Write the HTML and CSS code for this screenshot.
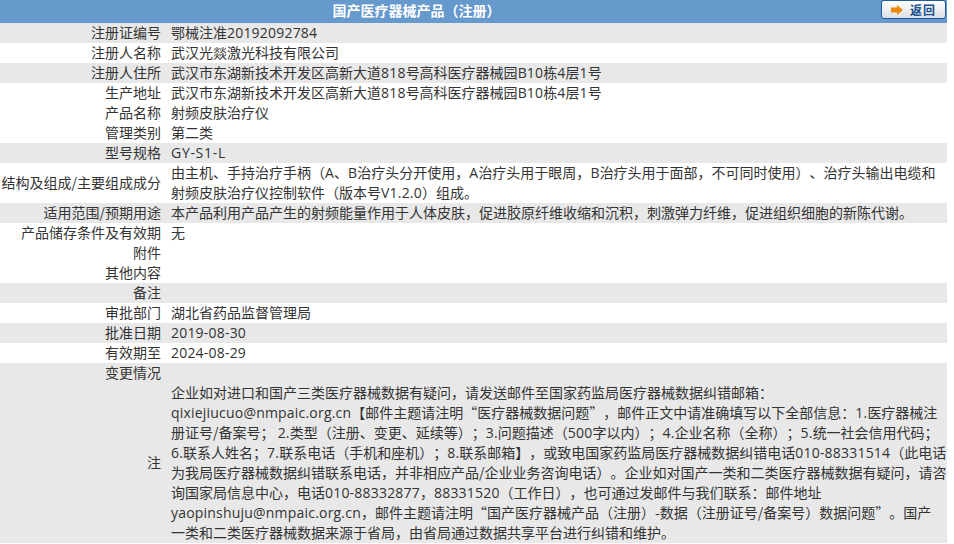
FILE: index.html
```html
<!DOCTYPE html>
<html lang="zh">
<head>
<meta charset="utf-8">
<title>国产医疗器械产品（注册）</title>
<link rel="stylesheet" href="styles.css">
</head>
<body>
<div class="sheet">
  <div class="head">
    <div class="head-title">国产医疗器械产品（注册）</div>
    <a class="back" href="#">
      <svg class="back-icon" width="12" height="10" viewBox="0 0 12 10"><path d="M0 2.5H6V0L12 5L6 10V7.5H0Z" fill="#e98a0c"/></svg>
      <span>返回</span>
    </a>
  </div>
  <div class="row grey"><div class="k">注册证编号</div><div class="v">鄂械注准<span class="la">20192092784</span></div></div>
  <div class="row"><div class="k">注册人名称</div><div class="v">武汉光燚激光科技有限公司</div></div>
  <div class="row grey"><div class="k">注册人住所</div><div class="v">武汉市东湖新技术开发区高新大道<span class="la">818</span>号高科医疗器械园<span class="la">B10</span>栋<span class="la">4</span>层<span class="la">1</span>号</div></div>
  <div class="row"><div class="k">生产地址</div><div class="v">武汉市东湖新技术开发区高新大道<span class="la">818</span>号高科医疗器械园<span class="la">B10</span>栋<span class="la">4</span>层<span class="la">1</span>号</div></div>
  <div class="row"><div class="k">产品名称</div><div class="v">射频皮肤治疗仪</div></div>
  <div class="row"><div class="k">管理类别</div><div class="v">第二类</div></div>
  <div class="row grey"><div class="k">型号规格</div><div class="v"><span class="la caps">GY-S1-L</span></div></div>
  <div class="row"><div class="k">结构及组成/主要组成成分</div><div class="v">由主机、手持治疗手柄（<span class="la">A</span>、<span class="la">B</span>治疗头分开使用，<span class="la">A</span>治疗头用于眼周，<span class="la">B</span>治疗头用于面部，不可同时使用）、治疗头输出电缆和射频皮肤治疗仪控制软件（版本号<span class="la">V1.2.0</span>）组成。</div></div>
  <div class="row grey"><div class="k">适用范围/预期用途</div><div class="v">本产品利用产品产生的射频能量作用于人体皮肤，促进胶原纤维收缩和沉积，刺激弹力纤维，促进组织细胞的新陈代谢。</div></div>
  <div class="row"><div class="k">产品储存条件及有效期</div><div class="v">无</div></div>
  <div class="row"><div class="k">附件</div><div class="v"></div></div>
  <div class="row"><div class="k">其他内容</div><div class="v"></div></div>
  <div class="row grey"><div class="k">备注</div><div class="v"></div></div>
  <div class="row"><div class="k">审批部门</div><div class="v">湖北省药品监督管理局</div></div>
  <div class="row grey"><div class="k">批准日期</div><div class="v"><span class="la">2019-08-30</span></div></div>
  <div class="row"><div class="k">有效期至</div><div class="v"><span class="la">2024-08-29</span></div></div>
  <div class="row grey"><div class="k">变更情况</div><div class="v"></div></div>
  <div class="row grey"><div class="k">注</div><div class="v">企业如对进口和国产三类医疗器械数据有疑问，请发送邮件至国家药监局医疗器械数据纠错邮箱：<span class="la">qixiejiucuo@nmpaic.org.cn</span>【邮件主题请注明“医疗器械数据问题”，邮件正文中请准确填写以下全部信息：<span class="la">1.</span>医疗器械注册证号/备案号； <span class="la">2.</span>类型（注册、变更、延续等）；<span class="la">3.</span>问题描述（<span class="la">500</span>字以内）；<span class="la">4.</span>企业名称（全称）；<span class="la">5.</span>统一社会信用代码；<span class="la">6.</span>联系人姓名；<span class="la">7.</span>联系电话（手机和座机）；<span class="la">8.</span>联系邮箱】，或致电国家药监局医疗器械数据纠错电话<span class="la">010-88331514</span>（此电话为我局医疗器械数据纠错联系电话，并非相应产品/企业业务咨询电话）。企业如对国产一类和二类医疗器械数据有疑问，请咨询国家局信息中心，电话<span class="la">010-88332877</span>，<span class="la">88331520</span>（工作日），也可通过发邮件与我们联系：邮件地址<span class="la">yaopinshuju@nmpaic.org.cn</span>，邮件主题请注明“国产医疗器械产品（注册）-数据（注册证号/备案号）数据问题”。国产<br>一类和二类医疗器械数据来源于省局，由省局通过数据共享平台进行纠错和维护。</div></div>
</div>
</body>
</html>
```
FILE: styles.css
```css
html, body {
  margin: 0;
  padding: 0;
  background: #fff;
}
body {
  overflow: hidden;
  height: 544px;
  font: 14px/20px "Noto Sans CJK SC", sans-serif;
  color: #333;
  text-spacing-trim: space-all;
}
.sheet {
  width: 947px;
}
.head {
  display: flex;
  justify-content: space-between;
  align-items: flex-start;
  height: 23px;
  background: #6699cc;
  color: #fff;
}
.head-title {
  width: 833px;
  text-align: center;
  font-weight: bold;
  font-size: 14px;
  line-height: 20px;
}
.back {
  box-sizing: border-box;
  width: 65px;
  height: 19px;
  margin-right: 1px;
  display: flex;
  align-items: center;
  justify-content: center;
  gap: 7px;
  border: 1px solid #1f5a9c;
  border-radius: 3px;
  background: linear-gradient(#ffffff, #dcdfe4);
  color: #1a4f8f;
  font-size: 12px;
  font-weight: bold;
  letter-spacing: 1px;
  line-height: 16px;
  text-decoration: none;
}
.row {
  display: flex;
  min-height: 20px;
}
.grey {
  background: #e8e8e8;
}
.k {
  flex: none;
  width: 161px;
  text-align: right;
  align-self: center;
  margin-top: -1px;
  margin-bottom: 1px;
}
.v {
  flex: 1;
  min-width: 0;
  padding-left: 10px;
  margin-top: -1px;
  margin-bottom: 1px;
}
.la {
  font-family: "Open Sans", sans-serif;
  letter-spacing: 0.2px;
  line-height: 0;
}
.caps {
  letter-spacing: 0.7px;
}
```
